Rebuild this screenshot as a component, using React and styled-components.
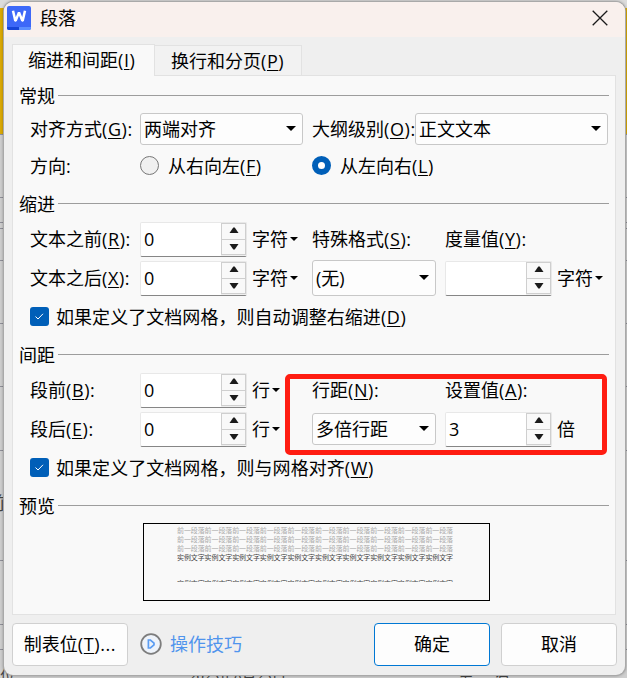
import styled, { createGlobalStyle } from "styled-components";

const font = '"Open Sans", "Noto Sans CJK SC", sans-serif';
const border = "#c8c8c8";
const blue = "#005fb8";

const GlobalStyle = createGlobalStyle`
  body {
    margin: 0;
    overflow: hidden;
  }
  * {
    box-sizing: border-box;
  }
`;

// ================================================
// Document behind the dialog
// ================================================
const Backdrop = styled.div`
  position: relative;
  width: 627px;
  height: 678px;
  padding: 2px 2px 3px 4px;
  overflow: hidden;
  font-family: ${font};
  font-size: 18px;
  line-height: 24px;
  color: #000;
  background: linear-gradient(#dcdcdc 8px, #dcaa04 8px, #dcaa04 134px, #cfcfcf 134px);
`;

const Behind = styled.span`
  position: absolute;
  left: ${props => props.x}px;
  top: ${props => props.y || 666}px;
  font-family: "Liberation Serif", "Noto Sans CJK SC", serif;
  font-size: ${props => props.size || 15}px;
  line-height: 20px;
  white-space: nowrap;
  color: #444;
`;

const GridLine = styled.div`
  position: absolute;
  left: 0;
  right: 0;
  top: ${props => props.y}px;
  height: 1px;
  background: #8f8f98;
`;

const Dialog = styled.div`
  position: relative;
  height: 673px;
  display: flex;
  flex-direction: column;
  overflow: hidden;
  background: #efefef;
  border-radius: 9px;
  box-shadow: 0 0 0 1px #a9a9a9, 0 0 3px 1px rgba(0,0,0,.3);
`;

const TitleBar = styled.div`
  display: flex;
  align-items: center;
  height: 35px;
  padding: 0 17px 3px 3px;
  background: #f9f0ed;
`;

const Title = styled.div`
  flex: 1;
  padding-left: 9px;
`;

const Tabs = styled.div`
  display: flex;
  align-items: flex-end;
  height: 38px;
  padding-left: 8px;
`;

const Tab = styled.div`
  position: relative;
  width: ${props => props.width}px;
  height: ${props => props.active ? 32 : 30}px;
  margin-bottom: ${props => props.active ? "-1px" : 0};
  padding: ${props => props.active ? "3px 0 0 15px" : "3px 0 0 16px"};
  white-space: nowrap;
  z-index: ${props => props.active ? 1 : 0};
  border: 1px solid #e2e2e2;
  border-bottom: none;
  ${props => !props.active && "border-left: none"};
  background: ${props => props.active ? "#f9f9f9" : "#f2f2f2"};
`;

const Panel = styled.div`
  width: 604px;
  height: 540px;
  margin-left: 8px;
  padding: 8px 6px 0;
  border: 1px solid #e2e2e2;
  background: #f9f9f9;
`;

const Legend = styled.div`
  display: flex;
  align-items: center;
  height: 24px;
  gap: 3px;
  &::after {
    content: "";
    flex: 1;
    height: 1px;
    margin-bottom: 1px;
    background: #9d9d9d;
  }
`;

const Rows = styled.div`
  display: flex;
  flex-direction: column;
  height: ${props => props.height}px;
  padding: ${props => props.top}px 0 0 11px;
`;

const Row = styled.div`
  display: flex;
  align-items: center;
  height: ${props => props.height || 39}px;
`;

const Cell = styled.div`
  display: flex;
  align-items: center;
  flex: none;
  width: ${props => props.width}px;
  white-space: nowrap;
`;

const Hint = styled.span`
  letter-spacing: .6px;
`;

const Key = styled.span`
  text-decoration: underline;
  text-decoration-thickness: 1px;
  text-underline-offset: 2px;
`;

const SelectBox = styled.div`
  display: flex;
  align-items: center;
  justify-content: space-between;
  flex: none;
  width: ${props => props.width}px;
  height: ${props => props.height || 32}px;
  margin-top: 1px;
  padding: 0 6px 1px 3px;
  border: 1px solid ${border};
  border-radius: 3px;
  background: #fdfdfd;
  white-space: nowrap;
`;

const SpinBox = styled.div`
  display: flex;
  justify-content: space-between;
  width: 107px;
  height: 35px;
  margin-top: 2px;
  border: 1px solid #e8e8e8;
  border-bottom-color: #868686;
  border-radius: 2px;
  background: #fff;
`;

const SpinValue = styled.span`
  padding: 4px 0 0 3px;
`;

const SpinButtons = styled.div`
  width: 25px;
  padding: 0 0 1px;
  background: #efefef;
`;

const SpinButton = styled.div`
  display: flex;
  align-items: center;
  justify-content: center;
  height: ${props => props.down ? 15 : 17}px;
  padding-bottom: ${props => props.down ? 0 : 4}px;
  border: 1px solid #cfcfcf;
  ${props => props.down && "border-top: none"};
  background: #f9f9f9;
`;

const Unit = styled.div`
  display: flex;
  align-items: center;
  gap: 2px;
  padding-left: 5px;
`;

const Radio = styled.div`
  width: 19px;
  height: 19px;
  margin-right: 9px;
  border-radius: 50%;
  border: ${props => props.checked ? `6px solid ${blue}` : "1px solid #777"};
  background: ${props => props.checked ? "#fff" : "#f0f0f0"};
`;

const CheckBox = styled.div`
  display: flex;
  align-items: center;
  justify-content: center;
  width: 19px;
  height: 19px;
  margin-right: 7px;
  border-radius: 3px;
  background: ${blue};
`;

const CheckText = styled.div`
  letter-spacing: .05px;
`;

const Preview = styled.div`
  width: 347px;
  height: 78px;
  margin: 5px 0 0 124px;
  padding: 2px 0 0 33px;
  border: 1px solid #000;
  overflow: hidden;
`;

const PreviewLine = styled.div`
  width: 290px;
  height: ${props => props.clip ? 2 : 9}px;
  margin-top: ${props => props.clip ? 18 : 0}px;
  overflow: hidden;
  font-size: 7px;
  line-height: 9px;
  white-space: nowrap;
  color: ${props => props.dark ? "#444" : "#aaa"};
  > span {
    display: block;
    width: 276px;
    text-align-last: justify;
    letter-spacing: -0.1px;
    ${props => props.clip && "transform: translateY(-1px)"};
  }
`;

const Highlight = styled.div`
  position: absolute;
  left: 285px;
  top: 374px;
  width: 322px;
  height: 81px;
  border: 5px solid #ff1d12;
  border-radius: 5px;
`;

const Footer = styled.div`
  display: flex;
  align-items: center;
  padding: 8px 8px 0;
`;

const Button = styled.div`
  display: flex;
  align-items: center;
  justify-content: center;
  width: 116px;
  height: 43px;
  margin-left: ${props => props.left || 0}px;
  padding-bottom: 1px;
  border: 1px solid ${props => props.primary ? "#0078d4" : "#d0d0d0"};
  border-radius: 4px;
  background: #fdfdfd;
`;

const Tips = styled.div`
  flex: 1;
  display: flex;
  align-items: center;
  gap: 8px;
  padding: 0 0 1px 12px;
  color: #4f94ed;
`;

const Logo = () => (
  <svg width="24" height="24" viewBox="0 0 24 24">
    <rect width="24" height="24" rx="2" fill="#3d68f8" />
    <path d="M0 21h12v3H2a2 2 0 0 1-2-2z" fill="#1745d8" />
    <path d="M12 21h12v1a2 2 0 0 1-2 2H12z" fill="#5b8fff" />
    <path d="M6 4.8l2.3 9.8h.4L12 6.4l3.3 8.2h.4L18 4.8" fill="none" stroke="#fff" strokeWidth="2.5" strokeLinejoin="bevel" />
  </svg>
);

const Close = () => (
  <svg width="16" height="16" viewBox="0 0 16 16">
    <path d="M.7.7l14.6 14.6M15.3.7L.7 15.3" stroke="#1a1a1a" strokeWidth="1.3" />
  </svg>
);

const Caret = ({ size = 10 }) => (
  <svg width={size} height={size / 2} viewBox="0 0 10 5">
    <path d="M0 0h10L5 5z" fill="#000" />
  </svg>
);

const Arrow = ({ up }) => (
  <svg width="10" height="6" viewBox="0 0 10 6">
    <path d={up ? "M.5 6h9L5.7.4H4.3z" : "M.5 0h9L5.7 5.6H4.3z"} fill="#1b1b1b" />
  </svg>
);

const Play = () => (
  <svg width="22" height="22" viewBox="0 0 22 22">
    <circle cx="11" cy="11" r="9.8" fill="#eef3fa" stroke="#7d7d7d" strokeWidth="1.8" />
    <path d="M8.4 7v8h2l3.6-3.2v-1.6L10.4 7z" fill="none" stroke="#5a9cf2" strokeWidth="1.7" />
  </svg>
);

const Label = ({ text, k, colon = ":" }) => (
  <span>{text}<Hint>(<Key>{k}</Key>){colon}</Hint></span>
);

const Select = ({ value, ...rest }) => (
  <SelectBox {...rest}>
    <span>{value}</span>
    <Caret />
  </SelectBox>
);

const Spin = ({ value }) => (
  <SpinBox>
    <SpinValue>{value}</SpinValue>
    <SpinButtons>
      <SpinButton><Arrow up /></SpinButton>
      <SpinButton down><Arrow /></SpinButton>
    </SpinButtons>
  </SpinBox>
);

const SpinField = ({ value, unit, menu = true }) => (
  <>
    <Spin value={value} />
    <Unit>{unit}{menu && <Caret size={8} />}</Unit>
  </>
);

const Check = ({ children }) => (
  <>
    <CheckBox>
      <svg width="9" height="7" viewBox="0 0 9 7">
        <path d="M.5 3.5L3 6l5-5.2" fill="none" stroke="#fff" />
      </svg>
    </CheckBox>
    <CheckText>{children}</CheckText>
  </>
);

const gridLines = [134, 197, 222, 228, 260, 323, 386, 450, 560, 624, 649];

export default function App() {
  return (
    <Backdrop>
      <GlobalStyle />
      {gridLines.map(y => <GridLine key={y} y={y} />)}
      <Behind x={-13} y={494} size={18}>前</Behind>
      <Behind x={0}>位:</Behind>
      <Behind x={189}>2023年8月23日</Behind>
      <Behind x={458}>集&emsp;&ensp;有</Behind>
      <Dialog>
        <TitleBar>
          <Logo />
          <Title>段落</Title>
          <Close />
        </TitleBar>
        <Tabs>
          <Tab width={143} active><Label text="缩进和间距" k="I" colon="" /></Tab>
          <Tab width={147}><Label text="换行和分页" k="P" colon="" /></Tab>
        </Tabs>
        <Panel>
          <Legend>常规</Legend>
          <Rows height={84} top={1}>
            <Row>
              <Cell width={110}><Label text="对齐方式" k="G" /></Cell>
              <Cell width={172}><Select width={163} value="两端对齐" /></Cell>
              <Cell width={103}><Label text="大纲级别" k="O" /></Cell>
              <Select width={193} value="正文文本" />
            </Row>
            <Row height={35}>
              <Cell width={110}>方向:</Cell>
              <Cell width={172}><Radio /><Label text="从右向左" k="F" colon="" /></Cell>
              <Cell width={172}><Radio checked /><Label text="从左向右" k="L" colon="" /></Cell>
            </Row>
          </Rows>
          <Legend>缩进</Legend>
          <Rows height={127} top={3}>
            <Row>
              <Cell width={110}><Label text="文本之前" k="R" /></Cell>
              <Cell width={172}><SpinField value="0" unit="字符" /></Cell>
              <Cell width={133}><Label text="特殊格式" k="S" /></Cell>
              <Cell width={160}><Label text="度量值" k="Y" /></Cell>
            </Row>
            <Row>
              <Cell width={110}><Label text="文本之后" k="X" /></Cell>
              <Cell width={172}><SpinField value="0" unit="字符" /></Cell>
              <Cell width={133}><Select width={124} height={36} value="(无)" /></Cell>
              <Cell width={160}><SpinField value="" unit="字符" /></Cell>
            </Row>
            <Row>
              <Check><Label text="如果定义了文档网格，则自动调整右缩进" k="D" colon="" /></Check>
            </Row>
          </Rows>
          <Legend>间距</Legend>
          <Rows height={127} top={3}>
            <Row>
              <Cell width={110}><Label text="段前" k="B" /></Cell>
              <Cell width={172}><SpinField value="0" unit="行" /></Cell>
              <Cell width={133}><Label text="行距" k="N" /></Cell>
              <Cell width={160}><Label text="设置值" k="A" /></Cell>
            </Row>
            <Row>
              <Cell width={110}><Label text="段后" k="E" /></Cell>
              <Cell width={172}><SpinField value="0" unit="行" /></Cell>
              <Cell width={133}><Select width={124} value="多倍行距" /></Cell>
              <Cell width={160}><SpinField value="3" unit="倍" menu={false} /></Cell>
            </Row>
            <Row>
              <Check><Label text="如果定义了文档网格，则与网格对齐" k="W" colon="" /></Check>
            </Row>
          </Rows>
          <Legend>预览</Legend>
          <Preview>
            {[1, 2, 3].map(n => (
              <PreviewLine key={n}><span>{"前一段落".repeat(10)}</span></PreviewLine>
            ))}
            <PreviewLine dark><span>{"实例文字".repeat(10)}</span></PreviewLine>
            <PreviewLine dark clip><span>{"实例文字".repeat(10)}</span></PreviewLine>
          </Preview>
        </Panel>
        <Footer>
          <Button><Label text="制表位" k="T" colon="..." /></Button>
          <Tips><Play />操作技巧</Tips>
          <Button primary>确定</Button>
          <Button left={11}>取消</Button>
        </Footer>
      </Dialog>
      <Highlight />
    </Backdrop>
  );
}
